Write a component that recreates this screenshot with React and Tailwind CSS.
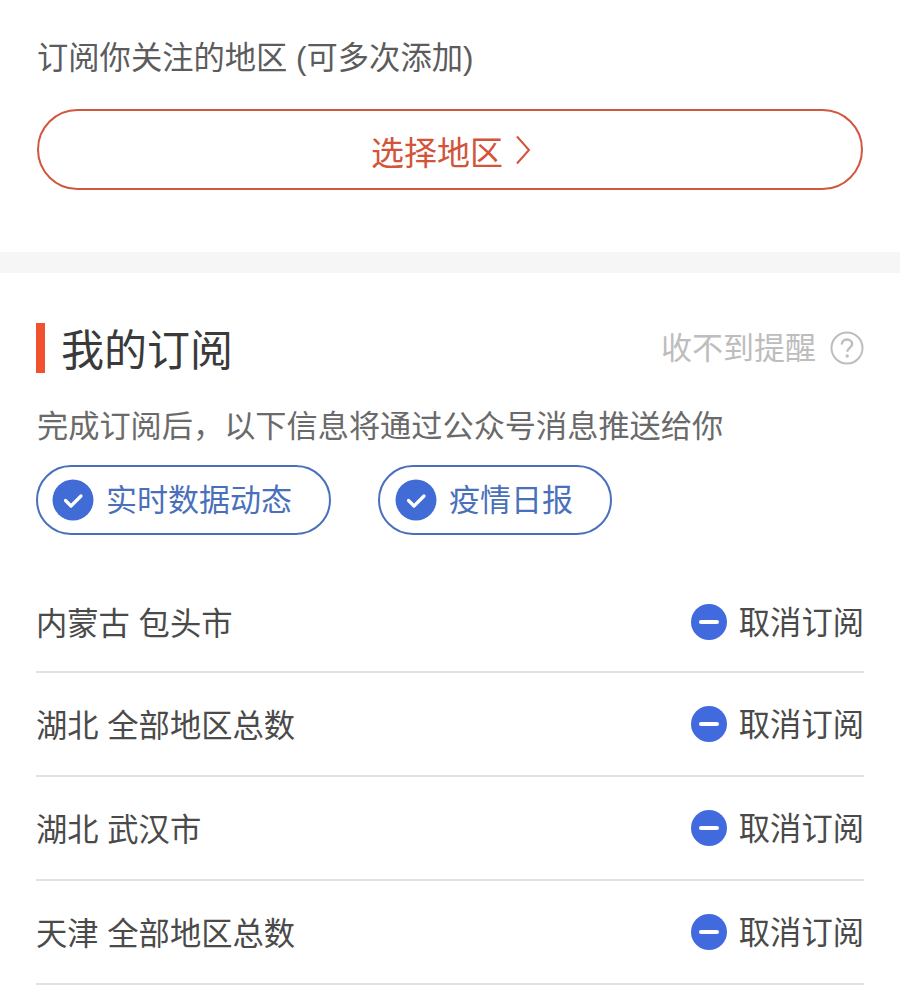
const CJK = 'font-["Liberation_Sans","Noto_Sans_CJK_SC",sans-serif]';

const regions = ['内蒙古 包头市', '湖北 全部地区总数', '湖北 武汉市', '天津 全部地区总数'];

function CheckDot() {
  return (
    <svg width="42" height="42" viewBox="0 0 42 42" className="shrink-0">
      <circle cx="21" cy="21" r="20.5" fill="#416cd6" />
      <path d="M13.5 21.5l5.5 5.5 10-10" fill="none" stroke="#fff" strokeWidth="3.2" strokeLinecap="round" strokeLinejoin="round" />
    </svg>
  );
}

function MinusDot() {
  return (
    <svg width="36" height="36" viewBox="0 0 36 36" className="mb-[2px] shrink-0">
      <circle cx="18" cy="18" r="18" fill="#416ade" />
      <rect x="8" y="16" width="20" height="4" rx="2" fill="#fff" />
    </svg>
  );
}

function Chip({ label, className }) {
  return (
    <div className={`flex h-[70px] items-center rounded-full border-2 border-[#4a70bb] text-[31px] text-[#4a70bb] ${className}`}>
      <CheckDot />
      <span className="ml-3 leading-none">{label}</span>
    </div>
  );
}

function RegionRow({ name }) {
  return (
    <div className="flex h-[104px] items-center justify-between border-b-2 border-[#e2e2e2] pt-[2px] first:h-[100px]">
      <span className="pt-[4px] text-[31.3px] leading-none text-[#4a4a4a]">{name}</span>
      <div className="flex items-center">
        <MinusDot />
        <span className="ml-[12px] pt-[2px] text-[31.3px] leading-none text-[#4a4a4a]">取消订阅</span>
      </div>
    </div>
  );
}

export default function App() {
  return (
    <div lang="zh-CN" className={`h-[1000px] w-[900px] overflow-hidden bg-white ${CJK}`}>
      <section className="h-[252px] px-[37px] pt-[41px]">
        <p className="text-[31.3px] leading-[35px] text-[#5c5c5c]">订阅你关注的地区 (可多次添加)</p>
        <button className="mt-[33px] flex h-[81px] w-full items-center justify-center rounded-full border-2 border-[#d2573f] pl-[2px] pt-[8px] text-[33px] leading-none text-[#d2543a]">
          选择地区
          <svg width="16" height="30" viewBox="0 0 16 30" className="ml-[12px] -translate-y-1" fill="none" stroke="#d2543a" strokeWidth="2">
            <path d="M2 1.5 14 15 2 28.5" />
          </svg>
        </button>
      </section>

      <div className="h-[21px] bg-[#f6f6f6]" />

      <section className="px-[36px] pt-[50px]">
        <div className="flex items-center justify-between">
          <div className="flex items-center">
            <div className="h-[50px] w-[9px] bg-[#f0522f]" />
            <h1 className="ml-[16px] h-[50px] text-[43px] font-normal leading-[56px] text-[#3a3a3a]">我的订阅</h1>
          </div>
          <div className="flex items-center text-[31px] leading-none text-[#bdbdbd]">
            收不到提醒
            <svg width="34" height="34" viewBox="0 0 34 34" className="ml-[14px]">
              <circle cx="17" cy="17" r="15.5" fill="none" stroke="#bdbdbd" strokeWidth="2" />
              <path d="M11.8 13.5c0-3 2.3-5 5.2-5s5.2 1.9 5.2 4.6c0 3.6-5 3.9-5 7.6" fill="none" stroke="#bdbdbd" strokeWidth="2.4" />
              <circle cx="17.2" cy="25" r="1.7" fill="#bdbdbd" />
            </svg>
          </div>
        </div>

        <p className="ml-px mt-[35px] text-[31.2px] leading-[37px] text-[#6a6a6a]">完成订阅后，以下信息将通过公众号消息推送给你</p>

        <div className="mt-[20px] flex gap-[47px]">
          <Chip label="实时数据动态" className="w-[295px] pl-[14px]" />
          <Chip label="疫情日报" className="w-[234px] pl-[15px]" />
        </div>

        <div className="mt-[38px] w-[828px]">
          {regions.map((name) => <RegionRow key={name} name={name} />)}
        </div>
      </section>
    </div>
  );
}
